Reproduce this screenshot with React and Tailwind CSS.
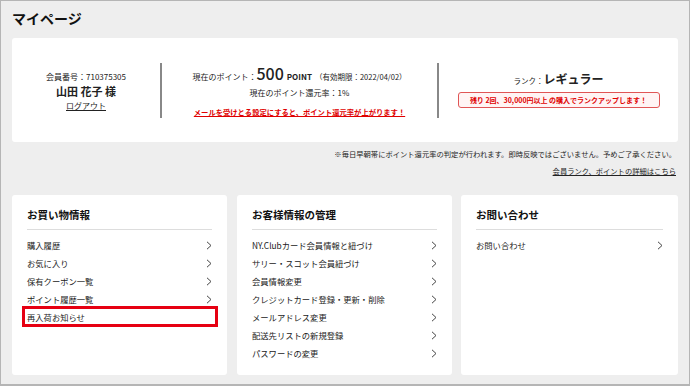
const font = { fontFamily: '"Noto Sans CJK JP", "Noto Sans", sans-serif' };

const Chevron = () => (
  <svg width="6" height="9" viewBox="0 0 6 9" className="shrink-0">
    <path d="M1 0.8 L5 4.5 L1 8.2" fill="none" stroke="#444" strokeWidth="1" />
  </svg>
);

const MenuCard = ({ title, items, highlight, className }) => (
  <div className={`relative bg-white rounded-[3px] px-[15px] pt-[12px] ${className}`}>
    <div className="text-[10.5px] leading-[16px] font-bold text-[#111] pb-[6px] border-b border-[#dddddd]">
      {title}
    </div>
    <div className="mt-[6px]">
      {items.map((item, i) => (
        <div key={i} className="h-[18px] flex items-center justify-between text-[8.3px] text-[#222]">
          <span>{item.label}</span>
          {item.arrow !== false && <Chevron />}
        </div>
      ))}
    </div>
    {highlight && (
      <div className="absolute left-[10px] top-[111px] w-[196px] h-[21px] border-[3px] border-[#e60012]" />
    )}
  </div>
);

const App = () => {
  return (
    <div
      style={font}
      className="w-[690px] h-[386px] bg-[#eeeeee] border border-[#b5b5b5] border-b-2 px-[11px] overflow-hidden text-[#222]"
    >
      <div className="pt-[7px] h-[37px] text-[14px] leading-[20px] font-bold text-[#111]">マイページ</div>

      <div className="bg-white rounded-[3px] h-[104px] flex items-center">
        <div className="w-[148px] flex flex-col items-center pt-[1px]">
          <div className="text-[8px] leading-[13px] whitespace-nowrap">会員番号：710375305</div>
          <div className="text-[11px] leading-[16px] font-bold whitespace-nowrap">山田 花子 様</div>
          <div className="text-[8px] leading-[13px] underline">ログアウト</div>
        </div>
        <div className="w-[277px] h-[55px] border-l-2 border-[#888888] flex flex-col items-center justify-center pt-[2px]">
          <div className="flex items-baseline leading-[18px] whitespace-nowrap">
            <span className="text-[8px]">現在のポイント：</span>
            <span className="text-[16px] font-medium">500</span>
            <span className="text-[8px] font-bold ml-[3px]">POINT</span>
            <span className="text-[7.5px] ml-[3px]">（有効期限：2022/04/02）</span>
          </div>
          <div className="text-[8px] leading-[14px]">現在のポイント還元率：1%</div>
          <div className="text-[7.3px] leading-[12px] mt-[6px] font-bold text-[#e00000] underline whitespace-nowrap">
            メールを受けとる設定にすると、ポイント還元率が上がります！
          </div>
        </div>
        <div className="flex-1 h-[55px] border-l-2 border-[#888888] flex flex-col items-center justify-center pb-[2px]">
          <div className="flex items-baseline leading-[18px]">
            <span className="text-[7.5px]">ランク：</span>
            <span className="text-[12px] font-bold">レギュラー</span>
          </div>
          <div className="mt-[2px] w-[202px] h-[16px] flex items-center justify-center border border-[#e05555] rounded-[3px] bg-[#fff4f4] text-[7px] font-bold text-[#e00000] whitespace-nowrap">
            残り 2回、30,000円以上 の購入でランクアップします！
          </div>
        </div>
      </div>

      <div className="flex flex-col items-end pr-[2px]">
        <div className="mt-[6px] text-[7.3px] leading-[12px] text-[#222] whitespace-nowrap">
          ※毎日早朝帯にポイント還元率の判定が行われます。即時反映ではございません。予めご了承ください。
        </div>
        <div className="mt-[5px] text-[7.3px] leading-[12px] underline whitespace-nowrap">
          会員ランク、ポイントの詳細はこちら
        </div>
      </div>

      <div className="mt-[18px] flex gap-[10px] h-[180px]">
        <MenuCard
          className="w-[215px]"
          title="お買い物情報"
          highlight
          items={[
            { label: "購入履歴" },
            { label: "お気に入り" },
            { label: "保有クーポン一覧" },
            { label: "ポイント履歴一覧" },
            { label: "再入荷お知らせ", arrow: false },
          ]}
        />
        <MenuCard
          className="w-[215px]"
          title="お客様情報の管理"
          items={[
            { label: "NY.Clubカード会員情報と紐づけ" },
            { label: "サリー・スコット会員紐づけ" },
            { label: "会員情報変更" },
            { label: "クレジットカード登録・更新・削除" },
            { label: "メールアドレス変更" },
            { label: "配送先リストの新規登録" },
            { label: "パスワードの変更" },
          ]}
        />
        <MenuCard className="flex-1 ml-[-1px]" title="お問い合わせ" items={[{ label: "お問い合わせ" }]} />
      </div>
    </div>
  );
};

export default App;
